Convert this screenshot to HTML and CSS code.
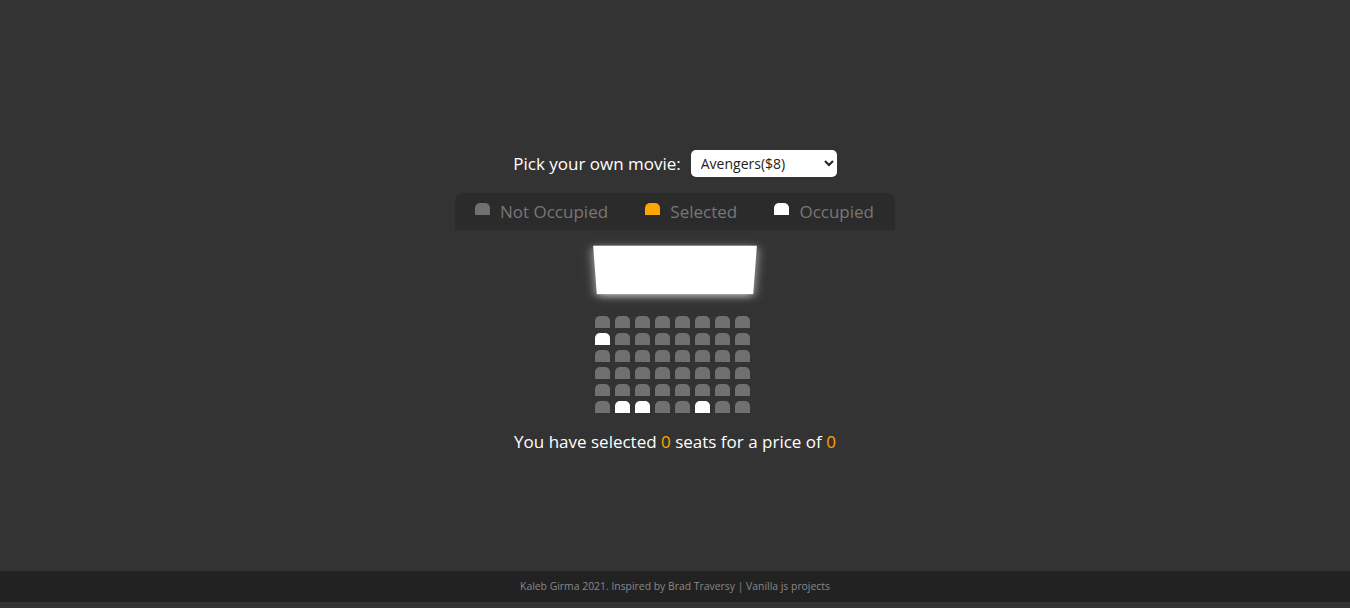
FILE: index.html
```html
<!DOCTYPE html>
<html lang="en">
<head>
  <meta charset="UTF-8" />
  <title>Movie Seat Booking</title>
  <link rel="stylesheet" href="styles.css">
</head>
<body>

<main class="booking">
  <div class="movie-container">
    <label for="movie">Pick your own movie:</label>
    <select id="movie">
      <option value="8">Avengers($8)</option>
      <option value="10">Joker($10)</option>
      <option value="12">Toy Story 4($12)</option>
      <option value="9">The Lion King($9)</option>
    </select>
  </div>

  <ul class="showcase">
    <li><div class="seat"></div><small>Not Occupied</small></li>
    <li><div class="seat selected"></div><small>Selected</small></li>
    <li><div class="seat occupied"></div><small>Occupied</small></li>
  </ul>

  <div class="container">
    <div class="screen"></div>

    <div class="row">
      <div class="seat"></div><div class="seat"></div><div class="seat"></div><div class="seat"></div>
      <div class="seat"></div><div class="seat"></div><div class="seat"></div><div class="seat"></div>
    </div>
    <div class="row">
      <div class="seat occupied"></div><div class="seat"></div><div class="seat"></div><div class="seat"></div>
      <div class="seat"></div><div class="seat"></div><div class="seat"></div><div class="seat"></div>
    </div>
    <div class="row">
      <div class="seat"></div><div class="seat"></div><div class="seat"></div><div class="seat"></div>
      <div class="seat"></div><div class="seat"></div><div class="seat"></div><div class="seat"></div>
    </div>
    <div class="row">
      <div class="seat"></div><div class="seat"></div><div class="seat"></div><div class="seat"></div>
      <div class="seat"></div><div class="seat"></div><div class="seat"></div><div class="seat"></div>
    </div>
    <div class="row">
      <div class="seat"></div><div class="seat"></div><div class="seat"></div><div class="seat"></div>
      <div class="seat"></div><div class="seat"></div><div class="seat"></div><div class="seat"></div>
    </div>
    <div class="row">
      <div class="seat"></div><div class="seat occupied"></div><div class="seat occupied"></div><div class="seat"></div>
      <div class="seat"></div><div class="seat occupied"></div><div class="seat"></div><div class="seat"></div>
    </div>
  </div>

  <p class="text">
    You have selected <span id="count">0</span> seats for a price of <span id="total">0</span>
  </p>
</main>

<footer class="footer">
  Kaleb Girma 2021. Inspired by Brad Traversy | Vanilla js projects
</footer>

</body>
</html>
```

FILE: styles.css
```css
* {
  box-sizing: border-box;
}
body {
  font-family: "Open Sans", "Liberation Sans", sans-serif;
  background-color: #333;
  color: #fff;
  margin: 0;
  min-height: 608px;
  display: flex;
  flex-direction: column;
}
.booking {
  flex: 1;
  display: flex;
  flex-direction: column;
  align-items: center;
  padding-top: 150px;
}
.movie-container {
  display: flex;
  align-items: center;
  font-size: 17px;
}
.movie-container label {
  margin-right: 10px;
}
.movie-container select {
  width: 146px;
  height: 27px;
  background: #fff;
  border: 0;
  border-radius: 5px;
  padding: 0 6px;
  font-family: inherit;
  font-size: 14px;
  color: #222;
}
.showcase {
  list-style: none;
  width: 440px;
  margin: 16px 0 8px;
  padding: 0 21px 0 20px;
  height: 37px;
  background: #2b2b2b;
  border-radius: 8px 8px 0 0;
  display: flex;
  justify-content: space-between;
  align-items: center;
  color: #777;
}
.showcase li {
  display: flex;
  align-items: center;
}
.showcase li small {
  font-size: 17px;
  margin-left: 10px;
}
.showcase .seat {
  margin: -5px 0 0;
}
.seat {
  background-color: #707070;
  width: 15px;
  height: 12px;
  margin: 2.5px 5px 2.5px 0;
  border-radius: 5px 5px 0 0;
}
.seat.selected {
  background-color: #ffa500;
}
.seat.occupied {
  background-color: #fff;
}
.container {
  perspective: 1000px;
  width: 160px;
}
.screen {
  background-color: #fff;
  height: 65px;
  width: 100%;
  margin-bottom: 10px;
  transform: rotateX(-45deg);
  box-shadow: 0 3px 10px rgba(255, 255, 255, 0.7);
}
.row {
  display: flex;
}
.text {
  margin: 15px 0 0;
  font-size: 17px;
}
.text span {
  color: #ffa500;
}
.footer {
  background: #222;
  color: #888;
  font-size: 10.4px;
  text-align: center;
  height: 31px;
  line-height: 31px;
  margin-bottom: 6px;
}
```
